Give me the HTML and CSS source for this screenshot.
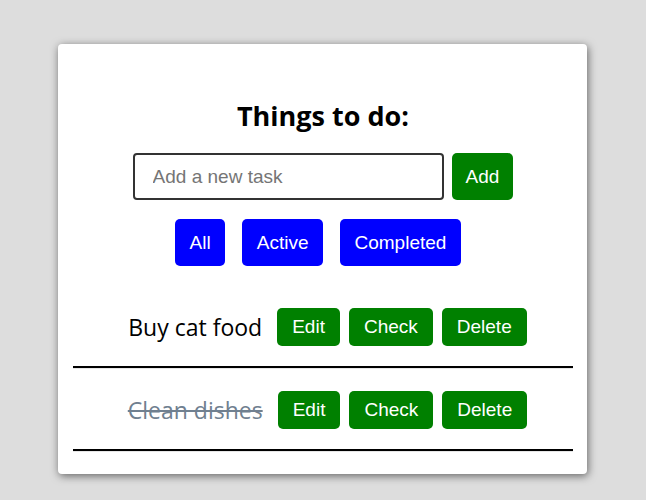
FILE: index.html
```html
<!DOCTYPE html>
<html lang="en">
<head>
<meta charset="utf-8">
<title>Todo</title>
<link rel="stylesheet" href="styles.css">
</head>
<body>
<div class="card">
  <h1 class="title">Things to do:</h1>
  <form class="add-form">
    <input class="add-input" type="text" placeholder="Add a new task">
    <button class="btn btn-green btn-big" type="button">Add</button>
  </form>
  <div class="filters">
    <button class="btn btn-blue btn-big" type="button">All</button>
    <button class="btn btn-blue btn-big" type="button">Active</button>
    <button class="btn btn-blue btn-big" type="button">Completed</button>
  </div>
  <ul class="tasks">
    <li class="task">
      <div class="task-row">
        <span class="task-text">Buy cat food</span>
        <div class="task-actions">
          <button class="btn btn-green btn-small" type="button">Edit</button>
          <button class="btn btn-green btn-small" type="button">Check</button>
          <button class="btn btn-green btn-small" type="button">Delete</button>
        </div>
      </div>
      <hr class="sep">
    </li>
    <li class="task">
      <div class="task-row">
        <span class="task-text done">Clean dishes</span>
        <div class="task-actions">
          <button class="btn btn-green btn-small" type="button">Edit</button>
          <button class="btn btn-green btn-small" type="button">Check</button>
          <button class="btn btn-green btn-small" type="button">Delete</button>
        </div>
      </div>
      <hr class="sep">
    </li>
  </ul>
</div>
</body>
</html>
```

FILE: styles.css
```css
html, body {
  margin: 0;
  padding: 0;
}
body {
  background: #dddddd;
  font-family: "Open Sans", "Noto Sans", sans-serif;
  height: 500px;
  overflow: hidden;
}
.card {
  box-sizing: border-box;
  width: 529px;
  margin: 44px 0 0 58px;
  background: #ffffff;
  border-radius: 4px;
  box-shadow: 1px 2px 8px rgba(0, 0, 0, 0.55);
  padding: 54px 14px 22px 15px;
  display: flex;
  flex-direction: column;
  align-items: stretch;
}
.title {
  margin: 0;
  font-size: 27px;
  line-height: 36px;
  font-weight: 700;
  text-align: center;
  color: #000;
}
.add-form {
  margin: 19px 0 0;
  display: flex;
  justify-content: center;
  gap: 8px;
}
.add-input {
  box-sizing: border-box;
  width: 311px;
  height: 47px;
  border: 2px solid #333;
  border-radius: 4px;
  padding: 0 18px;
  font-family: "Liberation Sans", Arial, sans-serif;
  font-size: 19px;
  color: #000;
  outline: none;
}
.add-input::placeholder {
  color: #757575;
}
.btn {
  box-sizing: border-box;
  border: none;
  border-radius: 5px;
  color: #fff;
  font-family: "Liberation Sans", Arial, sans-serif;
  font-size: 19px;
  line-height: 22px;
  cursor: pointer;
}
.btn-green {
  background: #008000;
}
.btn-blue {
  background: #0000ff;
}
.btn-big {
  height: 47px;
  padding: 0 14px;
}
.filters .btn-big {
  padding: 0 14.5px;
}
.btn-small {
  height: 38px;
  padding: 0 15px;
}
.filters {
  margin-top: 19px;
  display: flex;
  justify-content: center;
  gap: 17px;
  padding-right: 10px;
}
.tasks {
  list-style: none;
  margin: 20px 0 0;
  padding: 0;
}
.task {
  padding-top: 22px;
}
.task-row {
  display: flex;
  justify-content: center;
  align-items: center;
  gap: 15px;
  padding-left: 9px;
  height: 38px;
}
.task-text {
  font-size: 23px;
  color: #000;
}
.task-text.done {
  color: #708090;
  text-decoration: line-through;
}
.task-actions {
  display: flex;
  gap: 9px;
}
.sep {
  margin: 20px 0 0;
  height: 0;
  border: none;
  border-top: 2px solid #000;
  border-bottom: 1px solid #e6e6e6;
}
```
